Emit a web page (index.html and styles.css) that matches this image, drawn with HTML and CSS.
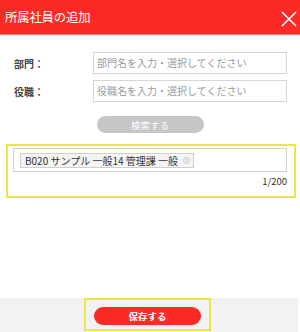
FILE: index.html
```html
<!DOCTYPE html>
<html lang="ja">
<head>
<meta charset="utf-8">
<link rel="stylesheet" href="styles.css">
</head>
<body>
<div class="modal">
  <div class="header">
    <span class="title">所属社員の追加</span>
    <svg class="close" width="16" height="16" viewBox="0 0 16 16"><path d="M1 1L15 15M15 1L1 15" stroke="#fff" stroke-width="1.6" fill="none"/></svg>
  </div>
  <div class="body">
    <div class="row">
      <span class="label">部門：</span>
      <div class="input">部門名を入力・選択してください</div>
    </div>
    <div class="row">
      <span class="label">役職：</span>
      <div class="input">役職名を入力・選択してください</div>
    </div>
    <div class="search-wrap"><div class="search-btn">検索する</div></div>
    <div class="selection">
      <div class="tags">
        <span class="tag">B020 サンプル 一般14 管理課 一般<svg class="x" width="7" height="7" viewBox="0 0 8 8"><circle cx="4" cy="4" r="3.5" fill="none" stroke="#c4c4c4" stroke-width="1"/><path d="M2.5 2.5L5.5 5.5M5.5 2.5L2.5 5.5" stroke="#c4c4c4" stroke-width="1"/></svg></span>
      </div>
      <div class="count">1/200</div>
    </div>
  </div>
  <div class="footer">
    <div class="save-hl"><div class="save-btn">保存する</div></div>
  </div>
</div>
</body>
</html>
```
FILE: styles.css
```css
* { box-sizing: border-box; }
html, body { margin: 0; padding: 0; background: #fff; }
body { font-family: "Noto Sans CJK JP", "Noto Sans", sans-serif; color: #333; }
.modal { width: 300px; height: 332px; display: flex; flex-direction: column; }
.header {
  height: 35px; background: #fb2a27; border-bottom: 1px solid #f77a76;
  display: flex; align-items: center; justify-content: space-between;
  padding: 0 3px 0 5px;
}
.title { color: #fff; font-size: 12.3px; letter-spacing: -0.1px; }
.close { margin-top: 4px; }
.body { flex: 1; padding: 17px 0 0 0; }
.row { display: flex; align-items: center; height: 22px; margin-bottom: 6px; }
.label { width: 93px; padding-left: 14px; font-size: 10px; font-weight: bold; color: #444; }
.input {
  width: 194px; height: 22px; border: 1px solid #d6d6d6; font-size: 10px;
  color: #9a9a9a; line-height: 20px; padding-left: 3px; white-space: nowrap; overflow: hidden;
}
.search-wrap { display: flex; justify-content: center; padding-top: 8px; }
.search-btn {
  width: 107px; height: 17px; border-radius: 9px; background: #c6c6c6; color: #fff;
  font-size: 9.5px; display: flex; align-items: center; justify-content: center;
}
.selection {
  margin: 11px 4px 0 6px; height: 54px; border: 2px solid #ebe74a;
  padding: 2px 7px 0 5px;
}
.tags { display: flex; align-items: flex-start; height: 24px; border: 1px solid #d2d2d2; padding: 4px 0 0 6px; }
.tag {
  display: inline-flex; align-items: center; height: 15px; border: 1px solid #cfcfcf;
  background: #f4f4f4; font-size: 10px; line-height: 13px; color: #333; padding: 0 3px 0 4px; gap: 5px;
}
.count { text-align: right; font-size: 9.5px; color: #333; padding-top: 2px; }
.footer {
  height: 34px; background: #f2f2f2; display: flex; justify-content: center; align-items: flex-start;
  margin-right: 2px;
}
.save-hl {
  width: 127px; height: 33px; border: 2px solid #ebe74a; display: flex; justify-content: center;
  padding-top: 7px; margin-left: -3px;
}
.save-btn {
  width: 107px; height: 18px; border-radius: 9px; background: #fb2a27; color: #fff; font-weight: bold;
  font-size: 9.5px; display: flex; align-items: center; justify-content: center;
}
```
